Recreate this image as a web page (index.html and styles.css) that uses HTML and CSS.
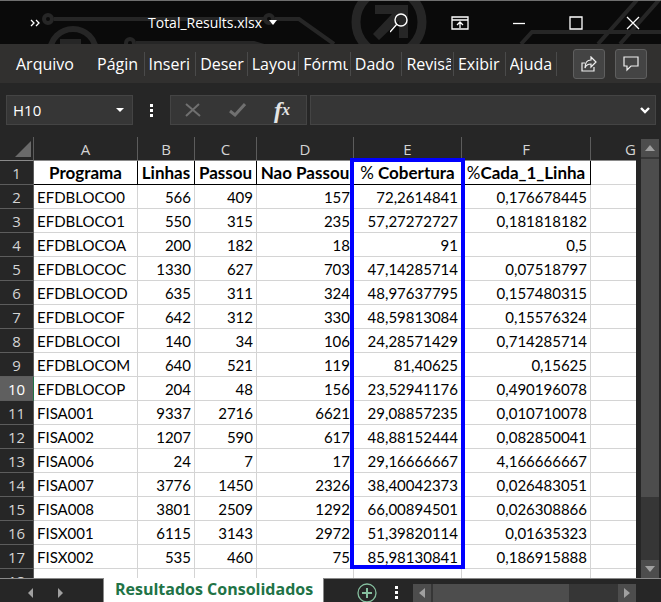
FILE: index.html
```
<!DOCTYPE html>
<html lang="pt-BR">
<head>
<meta charset="utf-8">
<title>Total_Results.xlsx</title>
<link rel="stylesheet" href="styles.css">
</head>
<body>
<div class="app">
  <header class="titlebar">
    <svg class="circuit" width="661" height="44" viewBox="0 0 661 44" fill="none" stroke="#262626" stroke-width="4" aria-hidden="true">
      <circle cx="48" cy="19" r="4"/>
      <path d="M54 19H264M275 19H299L334 44"/>
      <circle cx="269" cy="19" r="4"/>
      <path d="M50 52a23 23 0 0 1 46 0" stroke-width="6"/>
      <path d="M60 39h21v5H60z" fill="#262626" stroke="none"/>
      <circle cx="130" cy="43" r="4"/>
      <path d="M136 43H254L264 46"/>
      <circle cx="389" cy="22" r="33" stroke-width="9"/>
      <path d="M375 5h33v33h-9V21L379 40l-6-6 19-20H375z" fill="#262626" stroke="none"/>
      <path d="M521 44L532 32H661M598 44L637 0M620 44L659 0"/>
    </svg>
    <button class="icon-btn more" aria-label="Mais comandos"><svg width="10" height="8" viewBox="0 0 10 8" fill="none" stroke="#fff" stroke-width="1.3"><path d="M1 1l3 3-3 3M6 1l3 3-3 3"/></svg></button>
    <button class="file-name">Total_Results.xlsx <svg width="8" height="5" viewBox="0 0 8 5"><path d="M0 0h8L4 5z" fill="#fff"/></svg></button>
    <div class="window-tools">
      <button class="icon-btn" aria-label="Pesquisar"><svg width="18" height="20" viewBox="0 0 18 20" fill="none" stroke="#fff" stroke-width="1.4"><circle cx="11" cy="7" r="6"/><path d="M7 11L0 19"/></svg></button>
      <button class="icon-btn" aria-label="Opções da faixa"><svg width="18" height="14" viewBox="0 0 18 14" fill="none" stroke="#fff" stroke-width="1.3"><path d="M1 1h16v12H1zM1 4h16M9 12V6M6 9l3-3 3 3"/></svg></button>
      <button class="icon-btn" aria-label="Minimizar"><svg width="14" height="14" viewBox="0 0 14 14"><path d="M1 7.500h12" stroke="#fff" stroke-width="1.3"/></svg></button>
      <button class="icon-btn" aria-label="Maximizar"><svg width="14" height="14" viewBox="0 0 14 14"><path d="M1 1h12v12H1z" fill="none" stroke="#fff" stroke-width="1.3"/></svg></button>
      <button class="icon-btn" aria-label="Fechar"><svg width="14" height="14" viewBox="0 0 14 14"><path d="M1 1l12 12M13 1L1 13" stroke="#fff" stroke-width="1.3"/></svg></button>
    </div>
  </header>

  <nav class="menu">
    <button class="menu-file">Arquivo</button>
    <div class="menu-tabs">
      <button class="menu-tab"><span>Págin</span></button>
      <button class="menu-tab"><span>Inseri</span></button>
      <button class="menu-tab"><span>Deser</span></button>
      <button class="menu-tab"><span>Layou</span></button>
      <button class="menu-tab"><span>Fórmu</span></button>
      <button class="menu-tab"><span>Dado</span></button>
      <button class="menu-tab"><span>Revisã</span></button>
      <button class="menu-tab"><span>Exibir</span></button>
      <button class="menu-tab"><span>Ajuda</span></button>
    </div>
    <div class="menu-actions">
      <button class="action" aria-label="Compartilhar"><svg width="16" height="16" viewBox="0 0 16 16" fill="none" stroke="#eee" stroke-width="1.2"><path d="M4 7H1v8h12v-4M10 1l5 5-5 5V8C7 8 5 9 4 12c0-5 2-8 6-8z"/></svg></button>
      <button class="action" aria-label="Comentários"><svg width="16" height="16" viewBox="0 0 16 16" fill="none" stroke="#eee" stroke-width="1.2"><path d="M1 1h14v9H8l-4 4v-4H1z"/></svg></button>
    </div>
  </nav>

  <div class="formula-row">
    <div class="name-box">
      <input class="name-input" aria-label="Caixa de nome" value="H10">
      <svg width="8" height="4" viewBox="0 0 8 4"><path d="M0 0h8L4 4z" fill="#fff"/></svg>
    </div>
    <span class="dots"><i></i><i></i><i></i></span>
    <div class="fx-box">
      <button class="icon-btn" aria-label="Cancelar"><svg width="16" height="14" viewBox="0 0 16 14"><path d="M1 1l14 12M14 1L1 13" stroke="#707070" stroke-width="2"/></svg></button>
      <button class="icon-btn" aria-label="Inserir"><svg width="17" height="14" viewBox="0 0 17 14"><path d="M1 8l5 4L16 1" fill="none" stroke="#707070" stroke-width="3"/></svg></button>
      <button class="icon-btn fx" aria-label="Inserir função">f<span>x</span></button>
    </div>
    <div class="formula-box">
      <input class="formula-input" aria-label="Barra de fórmulas">
      <svg width="10" height="7" viewBox="0 0 10 7"><path d="M1 1l4 4 4-4" fill="none" stroke="#fff" stroke-width="2.400"/></svg>
    </div>
  </div>

  <main class="workspace">
    <div class="sheet">
      <table class="grid">
        <colgroup><col class="c-row"><col class="c-a"><col class="c-b"><col class="c-c"><col class="c-d"><col class="c-e"><col class="c-f"><col></colgroup>
        <thead>
          <tr><th class="corner"><svg width="16" height="16" viewBox="0 0 16 16"><path d="M16 0v16H0z" fill="#6a6a6a"/></svg></th><th>A</th><th>B</th><th>C</th><th>D</th><th>E</th><th>F</th><th class="last">G</th></tr>
        </thead>
        <tbody>
          <tr class="titles"><th>1</th><td>Programa</td><td>Linhas</td><td>Passou</td><td>Nao Passou</td><td><span>%</span> Cobertura</td><td><span>%</span>Cada_1_Linha</td><td></td></tr>
          <tr><th>2</th><td>EFDBLOCO0</td><td>566</td><td>409</td><td>157</td><td>72,2614841</td><td>0,176678445</td><td></td></tr>
          <tr><th>3</th><td>EFDBLOCO1</td><td>550</td><td>315</td><td>235</td><td>57,27272727</td><td>0,181818182</td><td></td></tr>
          <tr><th>4</th><td>EFDBLOCOA</td><td>200</td><td>182</td><td>18</td><td>91</td><td>0,5</td><td></td></tr>
          <tr><th>5</th><td>EFDBLOCOC</td><td>1330</td><td>627</td><td>703</td><td>47,14285714</td><td>0,07518797</td><td></td></tr>
          <tr><th>6</th><td>EFDBLOCOD</td><td>635</td><td>311</td><td>324</td><td>48,97637795</td><td>0,157480315</td><td></td></tr>
          <tr><th>7</th><td>EFDBLOCOF</td><td>642</td><td>312</td><td>330</td><td>48,59813084</td><td>0,15576324</td><td></td></tr>
          <tr><th>8</th><td>EFDBLOCOI</td><td>140</td><td>34</td><td>106</td><td>24,28571429</td><td>0,714285714</td><td></td></tr>
          <tr><th>9</th><td>EFDBLOCOM</td><td>640</td><td>521</td><td>119</td><td>81,40625</td><td>0,15625</td><td></td></tr>
          <tr class="current"><th>10</th><td>EFDBLOCOP</td><td>204</td><td>48</td><td>156</td><td>23,52941176</td><td>0,490196078</td><td></td></tr>
          <tr><th>11</th><td>FISA001</td><td>9337</td><td>2716</td><td>6621</td><td>29,08857235</td><td>0,010710078</td><td></td></tr>
          <tr><th>12</th><td>FISA002</td><td>1207</td><td>590</td><td>617</td><td>48,88152444</td><td>0,082850041</td><td></td></tr>
          <tr><th>13</th><td>FISA006</td><td>24</td><td>7</td><td>17</td><td>29,16666667</td><td>4,166666667</td><td></td></tr>
          <tr><th>14</th><td>FISA007</td><td>3776</td><td>1450</td><td>2326</td><td>38,40042373</td><td>0,026483051</td><td></td></tr>
          <tr><th>15</th><td>FISA008</td><td>3801</td><td>2509</td><td>1292</td><td>66,00894501</td><td>0,026308866</td><td></td></tr>
          <tr><th>16</th><td>FISX001</td><td>6115</td><td>3143</td><td>2972</td><td>51,39820114</td><td>0,01635323</td><td></td></tr>
          <tr><th>17</th><td>FISX002</td><td>535</td><td>460</td><td>75</td><td>85,98130841</td><td>0,186915888</td><td></td></tr>
          <tr><th>18</th><td></td><td></td><td></td><td></td><td></td><td></td><td></td></tr>
        </tbody>
      </table>
      <div class="highlight"></div>
    </div>
    <div class="vscroll">
      <button class="scroll-btn" aria-label="Rolar para cima"><svg width="10" height="6" viewBox="0 0 10 6"><path d="M0 6h10L5 0z" fill="#a0a0a0"/></svg></button>
      <div class="vthumb"></div>
      <button class="scroll-btn" aria-label="Rolar para baixo"><svg width="10" height="6" viewBox="0 0 10 6"><path d="M0 0h10L5 6z" fill="#a0a0a0"/></svg></button>
    </div>
  </main>

  <footer class="bottom">
    <div class="sheet-nav">
      <button class="icon-btn" aria-label="Planilha anterior"><svg width="5" height="10" viewBox="0 0 5 10"><path d="M5 0v10L0 5z" fill="#a0a0a0"/></svg></button>
      <button class="icon-btn" aria-label="Próxima planilha"><svg width="5" height="10" viewBox="0 0 5 10"><path d="M0 0v10l5-5z" fill="#a0a0a0"/></svg></button>
    </div>
    <button class="sheet-tab">Resultados Consolidados</button>
    <div class="bottom-tools">
      <button class="icon-btn" aria-label="Nova planilha"><svg width="20" height="20" viewBox="0 0 20 20" fill="none" stroke="#86bf9f"><circle cx="10" cy="10" r="9" stroke-width="1.3"/><path d="M5 10h10M10 5v10" stroke-width="2"/></svg></button>
      <span class="dots"><i></i><i></i><i></i></span>
      <div class="hscroll">
        <button class="scroll-btn" aria-label="Rolar para a esquerda"><svg width="6" height="10" viewBox="0 0 6 10"><path d="M6 0v10L0 5z" fill="#a0a0a0"/></svg></button>
        <div class="hthumb"></div>
        <button class="scroll-btn" aria-label="Rolar para a direita"><svg width="6" height="10" viewBox="0 0 6 10"><path d="M0 0v10l6-5z" fill="#a0a0a0"/></svg></button>
      </div>
    </div>
  </footer>
</div>
</body>
</html>
```

FILE: styles.css
```
* { box-sizing: border-box; }

body {
  margin: 0;
  background: #262626;
  color: #fff;
  font-family: "Open Sans", "Noto Sans", sans-serif;
  font-size: 16px;
}

button, input {
  margin: 0;
  padding: 0;
  border: 0;
  border-radius: 0;
  background: none;
  color: inherit;
  font: inherit;
}

svg { display: block; flex: none; }

.app {
  display: flex;
  flex-direction: column;
  height: 100vh;
  overflow: hidden;
}

.icon-btn {
  display: flex;
  align-items: center;
  justify-content: center;
}

/* Title bar */
.titlebar {
  position: relative;
  flex: none;
  display: flex;
  align-items: center;
  height: 44px;
  padding: 0 21px 0 30px;
  overflow: hidden;
  border-top: 1px solid #6f6f6f;
  background: #0a0a0a;
}

.circuit { position: absolute; left: 0; top: -1px; }

.more, .file-name, .window-tools { position: relative; }

.file-name {
  display: flex;
  align-items: center;
  gap: 7px;
  margin-left: 108px;
  font-size: 14px;
}

.window-tools {
  display: flex;
  align-items: center;
  gap: 43px;
  margin-left: auto;
}

/* Menu */
.menu {
  flex: none;
  display: flex;
  align-items: center;
  height: 39px;
  padding: 0 14px 0 16px;
  background: #31302f;
}

.menu-file { width: 77px; text-align: left; }

.menu-tabs {
  flex: 1;
  display: flex;
  min-width: 0;
  margin-right: 16px;
}

.menu-tab {
  flex: 1 1 0;
  min-width: 0;
  height: 24px;
  padding: 0 2px 0 4px;
  border-right: 1px solid #4a4a4a;
  text-align: left;
  white-space: nowrap;
}

.menu-tab span { display: block; overflow: hidden; }

.menu-actions { display: flex; gap: 10px; }

.action {
  display: flex;
  align-items: center;
  justify-content: center;
  width: 32px;
  height: 30px;
  border: 1px solid #5f5f5f;
  border-radius: 3px;
  background: #444;
}

/* Formula bar */
.formula-row {
  flex: none;
  display: flex;
  align-items: center;
  height: 54px;
  padding: 0 5px 0 6px;
}

.name-box, .fx-box, .formula-box {
  display: flex;
  align-items: center;
  height: 30px;
  border: 1px solid #444;
  background: #363636;
}

.name-box { width: 127px; padding: 0 8px 0 6px; }
.name-input { flex: 1; min-width: 0; font-size: 15px; }

.dots {
  display: flex;
  flex-direction: column;
  gap: 2px;
}

.dots i { width: 3px; height: 3px; background: #fff; }

.formula-row .dots { margin: 0 17px; }

.fx-box {
  justify-content: space-between;
  width: 137px;
  margin-right: 3px;
  padding: 0 16px 0 14px;
}

.fx {
  font-family: "Liberation Serif", serif;
  font-size: 24px;
  font-style: italic;
  font-weight: bold;
  line-height: 24px;
  color: #e4e4e4;
}

.fx span { font-size: 16px; }

.formula-box { flex: 1; padding: 0 5px; }
.formula-input { flex: 1; min-width: 0; }

/* Worksheet */
.workspace {
  flex: 1;
  display: flex;
  min-height: 0;
}

.sheet {
  position: relative;
  flex: 1;
  min-width: 0;
  overflow: hidden;
  background: #fff;
}

.grid {
  width: 100%;
  border-collapse: separate;
  border-spacing: 0;
  table-layout: fixed;
  color: #000;
  font-family: Lato, sans-serif;
  font-size: 15px;
}

.c-row { width: 34px; }
.c-a { width: 104px; }
.c-b { width: 57px; }
.c-c { width: 62px; }
.c-d { width: 97px; }
.c-e { width: 108px; }
.c-f { width: 129px; }

.grid th {
  height: 24px;
  padding: 1px 0 0;
  border-right: 1px solid #5c5c5c;
  border-bottom: 1px solid #5c5c5c;
  background: #262626;
  color: #d4d4d4;
  font-family: "Open Sans", "Noto Sans", sans-serif;
  font-size: 15px;
  font-weight: normal;
  line-height: 22px;
}

.grid thead th { border-bottom-color: #8a8a8a; }
.grid .last { border-right: 0; text-align: right; }
.corner svg { margin: 0 2px 0 auto; }

.grid td {
  height: 24px;
  padding: 1px 3px 0;
  border-right: 1px solid #d4d4d4;
  border-bottom: 1px solid #d4d4d4;
  line-height: 22px;
  text-align: right;
  white-space: nowrap;
}

.grid td:nth-child(2) { text-align: left; }
.grid td:last-child { border-right: 0; }

.grid .titles td {
  padding: 1px 0 0;
  border-color: #000;
  font-size: 17px;
  font-weight: bold;
  text-align: center;
}

.titles span { font-weight: normal; }

.grid .titles td:last-child { border-color: #d4d4d4; }

.grid .current th {
  border-right: 1px solid #217346;
  background: #5f5f5f;
  color: #fff;
}

.highlight {
  position: absolute;
  left: 350px;
  top: 21px;
  width: 115px;
  height: 411px;
  border: 4px solid #00f;
}

/* Scroll bars */
.scroll-btn {
  flex: none;
  display: flex;
  align-items: center;
  justify-content: center;
  width: 18px;
  height: 18px;
  background: #4d4d4d;
}

.vscroll {
  display: flex;
  flex-direction: column;
  width: 18px;
  margin: 2px 2px 0 5px;
  background: #363636;
}

.vthumb { height: 77%; margin-top: 2px; background: #4d4d4d; }
.vscroll .scroll-btn:last-child { margin-top: auto; }

/* Bottom bar */
.bottom {
  flex: none;
  display: flex;
  height: 24px;
  border-top: 1px solid #8a8a8a;
}

.sheet-nav {
  display: flex;
  align-items: center;
  gap: 25px;
  width: 103px;
  padding: 4px 0 0 28px;
}

.sheet-tab {
  margin-top: -1px;
  padding: 0 10px 2px 11px;
  border: solid #8a8a8a;
  border-width: 0 1px;
  background: #fff;
  color: #217346;
  font-size: 16px;
  font-weight: bold;
  line-height: 22px;
  white-space: nowrap;
}

.bottom-tools {
  flex: 1;
  display: flex;
  align-items: center;
  padding: 4px 25px 0 33px;
}

.bottom-tools .dots { margin: 0 15px 0 18px; }

.hscroll {
  flex: 1;
  display: flex;
  background: #363636;
}

.hthumb { width: 61%; margin-left: 2px; background: #4d4d4d; }
.hscroll .scroll-btn:last-child { margin-left: auto; }
```
